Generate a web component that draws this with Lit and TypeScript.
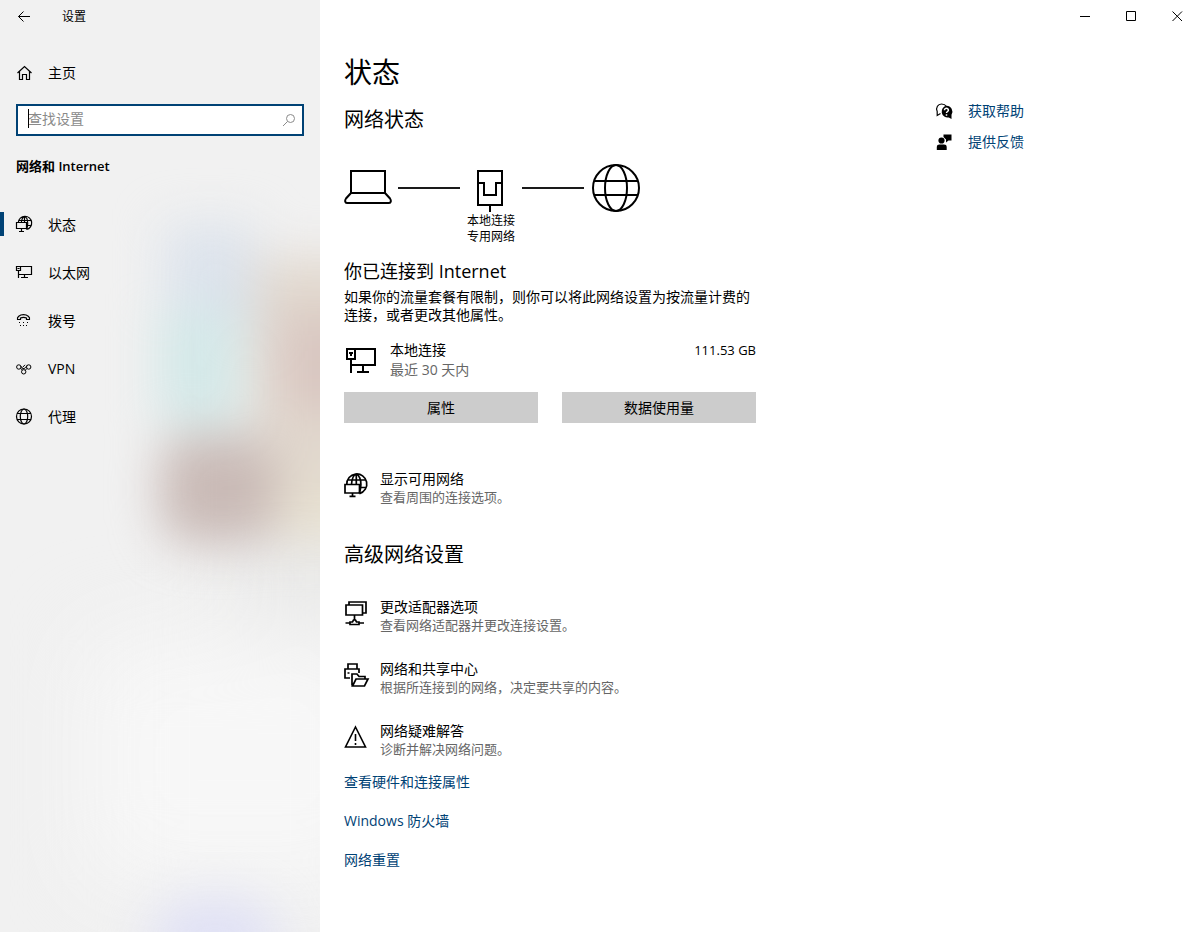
import { LitElement, html, css, svg, type TemplateResult, type SVGTemplateResult } from "lit";
import { customElement, property } from "lit/decorators.js";
import { classMap } from "lit/directives/class-map.js";

interface Glyph {
  width: number;
  height: number;
  body: SVGTemplateResult;
}

const GLYPHS: Record<string, Glyph> = {
  back: { width: 14, height: 14, body: svg`<path d="M13 6.500H1.500M6.500 1.500l-5 5 5 5" />` },
  home: {
    width: 16,
    height: 16,
    body: svg`<path stroke-width="1.200" d="M1.500 8L8.500 1.500l7 6.500M3.500 6.500v8h3V9.500h4v5h3V6.500" />`,
  },
  search: {
    width: 14,
    height: 14,
    body: svg`<circle cx="8.500" cy="5.500" r="4" /><path d="M5.500 8.500L1 13" />`,
  },
  minimize: { width: 11, height: 11, body: svg`<path d="M0 5.500h10" />` },
  maximize: { width: 11, height: 11, body: svg`<path d="M.500 .500h9v9h-9z" />` },
  close: { width: 11, height: 11, body: svg`<path d="M.500 .500l9.500 9.500M10 .500l-9.500 9.500" />` },
  status: {
    width: 16,
    height: 18,
    body: svg`<g stroke-width="1.200"><path d="M2.300 6.500A6.700 6.700 0 1 1 10.500 13.500M5.300 6.500C5.800 3 7 .700 8.500 .600c2 .300 3.200 3.500 3.200 6.900 0 2.400-.500 4.500-1.300 6M3 4.500h11.500M11 9.500h4M8.500 .500V6.500" />
      <path d="M.500 6.500h10v6H.500zM5.500 12.500V15M3 15.500h5" /></g>`,
  },
  ethernet: {
    width: 17,
    height: 16,
    body: svg`<path stroke-width="1.200" d="M4.500 1.500h11v8h-13M.500 1.500h4v4h-4zM2.500 5.500V13M8.500 9.500v3M5 12.500h7M1.500 3.500h2" />`,
  },
  dialup: {
    width: 14,
    height: 14,
    body: svg`<path stroke-width="1.200" d="M1.500 5.500C.800 3 3.500 .700 7.500 .700s6.700 2.300 6 4.800H10.500V4C9 3.300 6 3.300 4.500 4v1.500z" />
      <path d="M3 8.500h1m3 0h1m3 0h1M4 11.500h1m2 0h1m2 0h1" />`,
  },
  vpn: {
    width: 16,
    height: 12,
    body: svg`<circle cx="2.800" cy="4" r="2.200" /><circle cx="12.700" cy="4" r="2.200" /><circle cx="7.700" cy="8.800" r="2.200" />
      <path d="M4.800 3C6 5 6 6 8 5.500S10 3.500 11.200 2.300M4.700 5.200L6.300 7.200M6.500 4.500L9 1.800M9.300 7.300L11 5.300" />`,
  },
  proxy: {
    width: 16,
    height: 18,
    body: svg`<g stroke-width="1.200"><circle cx="8" cy="8.500" r="7.500" /><ellipse cx="8" cy="8.500" rx="3.700" ry="7.500" /><path d="M1 5.500h14M1 11.500h14" /></g>`,
  },
  laptop: {
    width: 48,
    height: 48,
    body: svg`<path stroke-width="2" d="M7 7h34v22H7zM7 29l-5 5.500C.500 36.500 1 39 3 39h42c2 0 2.500-2.500 1-4.500L41 29" />`,
  },
  port: {
    width: 50,
    height: 48,
    body: svg`<path stroke-width="2" d="M12 7h24v34H12zM12 19h6v12h12V19h6M24 41v7" />`,
  },
  internet: {
    width: 50,
    height: 48,
    body: svg`<g stroke-width="2"><circle cx="26" cy="24" r="23" /><ellipse cx="26" cy="24" rx="11" ry="23" /><path d="M4 17h44M4 31h44" /></g>`,
  },
  adapter: {
    width: 36,
    height: 28,
    body: svg`<path stroke-width="2" d="M10 3h21v16H7M3 3h8v10H3zM7 13v14M19 19v6M13 26h12M5 7h4M7 7v3" />`,
  },
  network: {
    width: 24,
    height: 24,
    body: svg`<g stroke-width="1.700"><path d="M2.800 11.500A10 10 0 1 1 15.500 20.600M7.500 11.500C8 5.500 10 1.500 12.300 1.200c3 .800 4.700 5.500 4.600 10.300-.100 3.500-.600 6.300-1.600 9M12.300 1.200V11.500M4 7h17M15 14.500h7.500" />
      <path d="M1 11.500h14.500v8.500H1zM8.500 20v3.500M5.500 23.300h6" /></g>`,
  },
  monitors: {
    width: 24,
    height: 26,
    body: svg`<path stroke-width="1.700" d="M5 5V2h17v11h-3M2 5h16.500v10H2zM10.500 15v5M1.500 23h4M15 23h5M6 24.500v-2.500h2.500l1-2h2l1 2H15v2.500z" />`,
  },
  sharing: {
    width: 25,
    height: 26,
    body: svg`<path stroke-width="1.700" d="M4 7V2h9v5M6 16H1V7h14v4M3.500 11h2" />
      <path stroke-width="1.700" d="M8 16v-4M8 23.500V12h5l2 2.500h6V17M8.500 24l3.500-7h12l-3.500 7z" />`,
  },
  warning: {
    width: 24,
    height: 24,
    body: svg`<path stroke-width="1.600" d="M11.500 2L21.500 22h-20z" /><path stroke-width="1.600" d="M11.500 9v7M11.500 18v2" />`,
  },
  help: {
    width: 17,
    height: 17,
    body: svg`<path stroke-width="1.200" d="M4.500 10.500L1.200 12.500V8.500C-.500 4.500 2 1 5.500 1c2.500 0 4 1 5 2.500" />
      <path fill="currentColor" stroke="none" d="M10.500 2.700a5.900 5.900 0 0 1 5 9V16l-2.700-1.500A5.900 5.900 0 1 1 10.500 2.700z" />
      <path stroke="#fff" stroke-width="1.500" d="M8.500 7.200c0-2.600 4-2.400 3.900 0 0 1.300-1.900 1.300-1.900 2.700M10.500 11.200v1.500" />`,
  },
  feedback: {
    width: 17,
    height: 17,
    body: svg`<g fill="currentColor" stroke="none"><circle cx="5.500" cy="6.500" r="3.100" /><path d="M.800 16v-3c0-1.700 1-2.500 2.700-2.500h4.500c1.700 0 2.700.800 2.700 2.500v3z" /><path d="M7.500 .500h8v6h-3L10 8.500V5.500L7.500 3z" /></g>`,
  },
};

@customElement("line-icon")
class LineIcon extends LitElement {
  @property() name = "";

  static styles = css`
    :host {
      display: inline-flex;
      flex: none;
    }
    .glyph {
      display: block;
      fill: none;
      stroke: currentColor;
      overflow: visible;
    }
  `;

  render() {
    const glyph = GLYPHS[this.name];
    return html`<svg class="glyph" width=${glyph.width} height=${glyph.height} aria-hidden="true">${glyph.body}</svg>`;
  }
}

const NAV = [
  { icon: "status", label: "状态" },
  { icon: "ethernet", label: "以太网" },
  { icon: "dialup", label: "拨号" },
  { icon: "vpn", label: "VPN" },
  { icon: "proxy", label: "代理" },
];

const ADVANCED = [
  { icon: "monitors", title: "更改适配器选项", note: "查看网络适配器并更改连接设置。" },
  { icon: "sharing", title: "网络和共享中心", note: "根据所连接到的网络，决定要共享的内容。" },
  { icon: "warning", title: "网络疑难解答", note: "诊断并解决网络问题。" },
];

const LINKS = ["查看硬件和连接属性", "Windows 防火墙", "网络重置"];

@customElement("app-root")
class AppRoot extends LitElement {
  static styles = css`
    :host {
      display: block;
      font-family: "Open Sans", "Noto Sans CJK SC", sans-serif;
      font-size: 14px;
      line-height: 18px;
      color: #000;
    }
    * {
      box-sizing: border-box;
    }
    h1, h2, h3, p {
      margin: 0;
      padding: 0;
      font-weight: 400;
    }
    button {
      border: 0;
      padding: 0;
      background: none;
      font: inherit;
      color: inherit;
      text-align: left;
    }
    a {
      color: #004275;
      text-decoration: none;
    }
    .window {
      display: grid;
      grid-template-columns: 320px 1fr;
      min-height: 100vh;
      background: #fff;
    }
    .sidebar {
      position: relative;
      overflow: hidden;
      background: #f1f1f1;
    }
    .backdrop {
      position: absolute;
      inset: 0;
      width: 100%;
      height: 100%;
    }
    .soft {
      filter: blur(24px);
    }
    .wide {
      filter: blur(45px);
    }
    .panel {
      position: relative;
      display: flex;
      flex-direction: column;
    }
    .titlebar {
      display: flex;
      align-items: center;
      height: 33px;
      font-size: 12px;
    }
    .back {
      display: flex;
      align-items: center;
      width: 62px;
      height: 32px;
      padding-left: 17px;
    }
    .entry {
      display: flex;
      align-items: center;
      gap: 16px;
      width: 100%;
      height: 48px;
      padding: 0 12px;
      border-left: 4px solid transparent;
    }
    .entry .slot {
      display: flex;
      width: 16px;
    }
    .home {
      margin-top: 16px;
    }
    .search {
      position: relative;
      display: flex;
      align-items: center;
      height: 32px;
      margin: 7px 16px 20px;
      padding: 0 6px 0 10px;
      border: 2px solid #004275;
      background: #fff;
      color: #8a8a8a;
    }
    .search input {
      flex: 1;
      min-width: 0;
      border: 0;
      padding: 0 0 2px;
      outline: 0;
      background: none;
      font: inherit;
    }
    .search input::placeholder {
      color: #8a8a8a;
      opacity: 1;
    }
    .caret {
      position: absolute;
      left: 10px;
      top: 3px;
      width: 1px;
      height: 19px;
      background: #000;
    }
    .section {
      padding: 0 16px;
      margin-bottom: 25px;
      font-weight: 600;
      font-size: 13px;
      line-height: 20px;
    }
    .entry.active {
      position: relative;
    }
    .entry.active::before {
      content: "";
      position: absolute;
      left: -4px;
      top: 11px;
      width: 4px;
      height: 24px;
      background: #004275;
    }
    .controls {
      display: flex;
      justify-content: flex-end;
      height: 32px;
    }
    .controls button {
      display: flex;
      align-items: center;
      justify-content: center;
      width: 46px;
    }
    .content {
      display: grid;
      grid-template-columns: minmax(0, 592px) minmax(0, 1fr);
      padding: 20px 24px 40px;
    }
    .main {
      max-width: 412px;
    }
    .main h1 {
      font-size: 28px;
      line-height: 40px;
    }
    .main h2 {
      font-size: 20px;
      line-height: 28px;
    }
    .status-title {
      margin: 14px 0 30px;
    }
    .diagram {
      display: grid;
      grid-template-columns: 48px 62px 50px 62px 50px;
      gap: 1px 6px;
      align-items: center;
      margin-bottom: 16px;
    }
    .wire {
      height: 2px;
      background: #1a1a1a;
    }
    .diagram p {
      grid-column: 3;
      font-size: 12px;
      line-height: 16px;
      text-align: center;
      white-space: nowrap;
    }
    .main h3 {
      font-size: 18px;
      line-height: 20px;
      margin-bottom: 7px;
    }
    .usage {
      display: flex;
      gap: 10px;
      margin: 16px 0 12px;
      line-height: 20px;
    }
    .usage line-icon {
      margin-top: 6px;
    }
    .usage .name {
      flex: 1;
    }
    .amount {
      font-size: 13px;
    }
    .muted {
      color: #666;
    }
    .actions {
      display: grid;
      grid-template-columns: 1fr 1fr;
      gap: 24px;
      margin-bottom: 47px;
    }
    .actions button {
      height: 31px;
      background: #ccc;
      text-align: center;
    }
    .option {
      display: flex;
      gap: 12px;
      white-space: nowrap;
    }
    .option .slot {
      display: flex;
      align-items: center;
      width: 24px;
      height: 30px;
    }
    .option .text {
      display: flex;
      flex-direction: column;
    }
    .option .muted {
      font-size: 13px;
    }
    .advanced-title {
      margin: 35px 0 29px;
    }
    .options {
      display: flex;
      flex-direction: column;
      gap: 26px;
      margin-bottom: 15px;
    }
    .links {
      display: flex;
      flex-direction: column;
      gap: 21px;
    }
    .support {
      display: flex;
      flex-direction: column;
      gap: 13px;
      padding-top: 50px;
    }
    .support a {
      display: flex;
      align-items: center;
      gap: 15px;
    }
    .support line-icon {
      color: #000;
    }
  `;

  private option(icon: string, title: string, note: string): TemplateResult {
    return html`<button class="option">
      <span class="slot"><line-icon name=${icon}></line-icon></span>
      <span class="text"><span>${title}</span><span class="muted">${note}</span></span>
    </button>`;
  }

  render() {
    return html`
      <div class="window">
        <aside class="sidebar">
          <svg class="backdrop" viewBox="0 0 320 932" preserveAspectRatio="xMinYMin slice" aria-hidden="true">
            <g class="wide">
              <rect x="90" y="640" width="300" height="240" fill="#f7f7f7" />
              <rect x="235" y="500" width="150" height="120" fill="#e8e8e7" />
            </g>
            <g class="soft">
              <rect x="165" y="225" width="90" height="110" fill="#dce3ec" />
              <rect x="158" y="310" width="82" height="115" fill="#d3e8e8" />
              <rect x="255" y="258" width="140" height="280" fill="#e1d8ce" />
              <rect x="275" y="315" width="120" height="95" fill="#d9c7c1" />
              <rect x="160" y="435" width="115" height="108" rx="30" fill="#c9bab6" />
              <rect x="285" y="480" width="110" height="60" fill="#e6dfcf" />
              <ellipse cx="215" cy="938" rx="65" ry="42" fill="#e0e1f5" />
            </g>
          </svg>
          <div class="panel">
            <div class="titlebar">
              <button class="back" aria-label="返回"><line-icon name="back"></line-icon></button>
              <span>设置</span>
            </div>
            <button class="entry home"><span class="slot"><line-icon name="home"></line-icon></span>主页</button>
            <label class="search">
              <input type="text" placeholder="查找设置" aria-label="查找设置" />
              <span class="caret"></span>
              <line-icon name="search"></line-icon>
            </label>
            <h2 class="section">网络和 Internet</h2>
            <nav>
              ${NAV.map(
                (item, i) => html`<button class=${classMap({ entry: true, active: i === 0 })}>
                  <span class="slot"><line-icon name=${item.icon}></line-icon></span>${item.label}
                </button>`
              )}
            </nav>
          </div>
        </aside>
        <div>
          <div class="controls">
            <button aria-label="最小化"><line-icon name="minimize"></line-icon></button>
            <button aria-label="最大化"><line-icon name="maximize"></line-icon></button>
            <button aria-label="关闭"><line-icon name="close"></line-icon></button>
          </div>
          <div class="content">
            <main class="main">
              <h1>状态</h1>
              <h2 class="status-title">网络状态</h2>
              <div class="diagram">
                <line-icon name="laptop"></line-icon>
                <span class="wire"></span>
                <line-icon name="port"></line-icon>
                <span class="wire"></span>
                <line-icon name="internet"></line-icon>
                <p>本地连接<br />专用网络</p>
              </div>
              <h3>你已连接到 Internet</h3>
              <p>如果你的流量套餐有限制，则你可以将此网络设置为按流量计费的连接，或者更改其他属性。</p>
              <div class="usage">
                <line-icon name="adapter"></line-icon>
                <div class="name">
                  <p>本地连接</p>
                  <p class="muted">最近 30 天内</p>
                </div>
                <span class="amount">111.53 GB</span>
              </div>
              <div class="actions">
                <button>属性</button>
                <button>数据使用量</button>
              </div>
              ${this.option("network", "显示可用网络", "查看周围的连接选项。")}
              <h2 class="advanced-title">高级网络设置</h2>
              <div class="options">${ADVANCED.map((o) => this.option(o.icon, o.title, o.note))}</div>
              <div class="links">${LINKS.map((l) => html`<a href="#">${l}</a>`)}</div>
            </main>
            <aside class="support">
              <a href="#"><line-icon name="help"></line-icon>获取帮助</a>
              <a href="#"><line-icon name="feedback"></line-icon>提供反馈</a>
            </aside>
          </div>
        </div>
      </div>
    `;
  }
}
